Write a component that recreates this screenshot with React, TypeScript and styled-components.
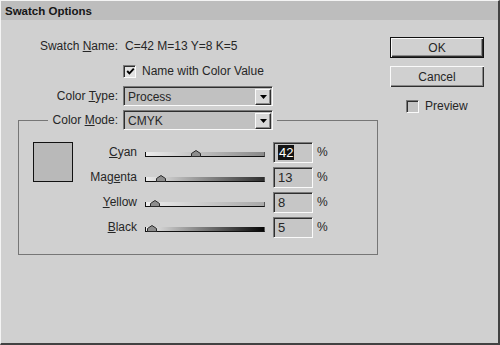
import React from "react";
import styled, { createGlobalStyle } from "styled-components";

const GlobalStyle = createGlobalStyle`
  html, body {
    margin: 0;
    padding: 0;
    background: #d0d0d0;
  }
  body {
    font-family: "Liberation Sans", Arial, sans-serif;
    color: #262626;
  }
`;

interface Channel {
  name: string;
  hotkey: number;
  value: number;
  end: string;
  selected?: boolean;
}

const channels: Channel[] = [
  { name: "Cyan", hotkey: 0, value: 42, end: "#8a8a8a", selected: true },
  { name: "Magenta", hotkey: 3, value: 13, end: "#2e2e2e" },
  { name: "Yellow", hotkey: 0, value: 8, end: "#a9a9a9" },
  { name: "Black", hotkey: 0, value: 5, end: "#050505" },
];

// underline the access key like a classic windows label
const withKey = (text: string, index: number) => (
  <>
    {text.slice(0, index)}
    <u>{text[index]}</u>
    {text.slice(index + 1)}
  </>
);

const CheckMark = () => (
  <svg width="9" height="9" viewBox="0 0 9 9">
    <polyline
      points="1.2,4 3.4,6.3 7.8,1.6"
      fill="none"
      stroke="#000"
      strokeWidth="1.9"
    />
  </svg>
);

const Arrow = () => (
  <svg width="7" height="4" viewBox="0 0 7 4">
    <polygon points="0,0 7,0 3.5,4" fill="#000" />
  </svg>
);

const ThumbShape = () => (
  <svg width="10" height="7" viewBox="0 0 10 7">
    <polygon
      points="0.5,6.5 0.5,3.5 5,0.5 9.5,3.5 9.5,6.5"
      fill="#8e8e8e"
      stroke="#2a2a2a"
    />
  </svg>
);

const Dropdown: React.FC<{ value: string }> = ({ value }) => (
  <SelectBox>
    <SelectText>{value}</SelectText>
    <ArrowButton>
      <Arrow />
    </ArrowButton>
  </SelectBox>
);

const App: React.FC = () => {
  return (
    <>
      <GlobalStyle />
      <Window>
        <TitleBar>Swatch Options</TitleBar>
        <Body>
          <LeftColumn>
            <FieldGrid>
              <FieldLabel>Swatch {withKey("Name", 0)}:</FieldLabel>
              <FieldValue>C=42 M=13 Y=8 K=5</FieldValue>
              <span />
              <CheckRow>
                <CheckBox $checked>
                  <CheckMark />
                </CheckBox>
                Name with Color Value
              </CheckRow>
              <FieldLabel>Color {withKey("Type", 0)}:</FieldLabel>
              <Dropdown value="Process" />
            </FieldGrid>
            <GroupBox>
              <GroupLegend>
                <LegendRow>
                  <LegendLabel>Color {withKey("Mode", 0)}:</LegendLabel>
                  <Dropdown value="CMYK" />
                </LegendRow>
              </GroupLegend>
              <GroupContent>
                <Swatch />
                <ChannelGrid>
                  {channels.map((ch) => (
                    <React.Fragment key={ch.name}>
                      <ChannelLabel>{withKey(ch.name, ch.hotkey)}</ChannelLabel>
                      <Slider>
                        <Track $end={ch.end}>
                          <Thumb style={{ left: `calc(${ch.value}% - 5px)` }}>
                            <ThumbShape />
                          </Thumb>
                        </Track>
                      </Slider>
                      <ValueCell>
                        <NumberBox>
                          {ch.selected ? (
                            <Selected>{ch.value}</Selected>
                          ) : (
                            ch.value
                          )}
                        </NumberBox>
                        <Percent>%</Percent>
                      </ValueCell>
                    </React.Fragment>
                  ))}
                </ChannelGrid>
              </GroupContent>
            </GroupBox>
          </LeftColumn>
          <RightColumn>
            <DialogButton $default>OK</DialogButton>
            <DialogButton>Cancel</DialogButton>
            <PreviewRow>
              <CheckBox />
              Preview
            </PreviewRow>
          </RightColumn>
        </Body>
      </Window>
    </>
  );
};

const Window = styled.div`
  width: 500px;
  height: 345px;
  box-sizing: border-box;
  background: #d0d0d0;
  border-top: 1px solid #f4f4f4;
  border-left: 1px solid #f4f4f4;
  border-right: 2px solid #424242;
  border-bottom: 2px solid #424242;
  overflow: hidden;
`;

const TitleBar = styled.div`
  height: 19px;
  display: flex;
  align-items: center;
  padding-left: 4px;
  background: #bdbdbd;
  font-size: 11.5px;
  font-weight: 700;
  color: #161616;
`;

const Body = styled.div`
  display: flex;
  padding: 16px 0 0 17px;
  font-size: 12px;
`;

const LeftColumn = styled.div`
  width: 360px;
  display: flex;
  flex-direction: column;
`;

const FieldGrid = styled.div`
  display: grid;
  grid-template-columns: 100px 150px;
  grid-auto-rows: 20px;
  column-gap: 5px;
  row-gap: 5px;
  align-items: center;
`;

const FieldLabel = styled.div`
  text-align: right;
  white-space: nowrap;
`;

const FieldValue = styled.div`
  padding-left: 2px;
  white-space: nowrap;
`;

const CheckRow = styled.label`
  display: flex;
  align-items: center;
  gap: 6px;
  white-space: nowrap;
`;

const CheckBox = styled.span<{ $checked?: boolean }>`
  width: 13px;
  height: 13px;
  box-sizing: border-box;
  display: flex;
  align-items: center;
  justify-content: center;
  border-top: 1px solid #7a7a7a;
  border-left: 1px solid #7a7a7a;
  border-bottom: 1px solid #fafafa;
  border-right: 1px solid #fafafa;
  box-shadow: inset 1px 1px 0 #2e2e2e;
  background: ${(p) => (p.$checked ? "#e2e2e2" : "#c4c4c4")};
  padding: 1px 0 0 1px;
`;

const SelectBox = styled.div`
  width: 150px;
  height: 20px;
  box-sizing: border-box;
  display: flex;
  align-items: center;
  justify-content: space-between;
  border-top: 1px solid #7a7a7a;
  border-left: 1px solid #7a7a7a;
  border-bottom: 1px solid #fafafa;
  border-right: 1px solid #fafafa;
  box-shadow: inset 1px 1px 0 #2e2e2e;
  background: #c1c1c1;
  padding: 1px 1px 0 4px;
`;

const SelectText = styled.span`
  white-space: nowrap;
`;

const ArrowButton = styled.span`
  width: 16px;
  height: 16px;
  box-sizing: border-box;
  display: flex;
  align-items: center;
  justify-content: center;
  background: #d8d8d8;
  border-top: 1px solid #fafafa;
  border-left: 1px solid #fafafa;
  border-bottom: 1px solid #2e2e2e;
  border-right: 1px solid #2e2e2e;
  box-shadow: inset -1px -1px 0 #8a8a8a;
`;

const GroupBox = styled.fieldset`
  margin: 4px 0 0;
  padding: 0;
  width: 360px;
  box-sizing: border-box;
  min-width: 0;
  border: 1px solid #767676;
`;

const GroupLegend = styled.legend`
  margin-left: 29px;
  padding: 0 4px;
`;

const LegendRow = styled.div`
  display: flex;
  align-items: center;
  gap: 5px;
`;

const LegendLabel = styled.span`
  width: 66px;
  display: flex;
  justify-content: flex-end;
  white-space: pre;
`;

const GroupContent = styled.div`
  display: flex;
  align-items: flex-start;
  padding: 12px 0 17px 14px;
`;

const Swatch = styled.div`
  width: 40px;
  height: 40px;
  box-sizing: border-box;
  border: 1px solid #111;
  background: #b9b9b9;
`;

const ChannelGrid = styled.div`
  margin-left: 8px;
  display: grid;
  grid-template-columns: 56px 120px auto;
  grid-auto-rows: 20px;
  column-gap: 8px;
  row-gap: 5px;
  align-items: center;
`;

const ChannelLabel = styled.div`
  text-align: right;
  white-space: nowrap;
`;

const Slider = styled.div`
  height: 20px;
  display: flex;
  align-items: center;
  padding-top: 5px;
  box-sizing: border-box;
`;

const Track = styled.div<{ $end: string }>`
  position: relative;
  width: 100%;
  height: 5px;
  box-sizing: border-box;
  border-left: 1px solid #111;
  border-bottom: 1px solid #111;
  border-right: 1px solid #555;
  background: linear-gradient(to right, #ececec, ${(p) => p.$end});
`;

const Thumb = styled.span`
  position: absolute;
  bottom: -1px;
  display: flex;
`;

const ValueCell = styled.div`
  display: flex;
  align-items: center;
  gap: 4px;
`;

const NumberBox = styled.div`
  width: 40px;
  height: 21px;
  box-sizing: border-box;
  display: flex;
  align-items: center;
  padding: 1px 0 0 4px;
  font-size: 13px;
  border-top: 1px solid #7a7a7a;
  border-left: 1px solid #7a7a7a;
  border-bottom: 1px solid #fafafa;
  border-right: 1px solid #fafafa;
  box-shadow: inset 1px 1px 0 #2e2e2e;
  background: #c6c6c6;
`;

const Selected = styled.span`
  background: #141414;
  color: #fff;
  padding: 0 1px;
  line-height: 15px;
`;

const Percent = styled.span`
  font-size: 12px;
`;

const RightColumn = styled.div`
  margin-left: 12px;
  padding-top: 1px;
  width: 94px;
  display: flex;
  flex-direction: column;
  gap: 8px;
`;

const DialogButton = styled.button<{ $default?: boolean }>`
  width: 94px;
  height: 21px;
  box-sizing: border-box;
  padding: 0;
  font-family: inherit;
  font-size: 12px;
  color: #262626;
  background: #d0d0d0;
  border: ${(p) => (p.$default ? "1px solid #111" : "none")};
  box-shadow: inset 1px 1px 0 #fafafa, inset -1px -1px 0 #2e2e2e,
    inset -2px -2px 0 #8a8a8a;
`;

const PreviewRow = styled.label`
  margin-top: 4px;
  padding-left: 16px;
  display: flex;
  align-items: center;
  gap: 6px;
  font-size: 12px;
`;

export default App;
